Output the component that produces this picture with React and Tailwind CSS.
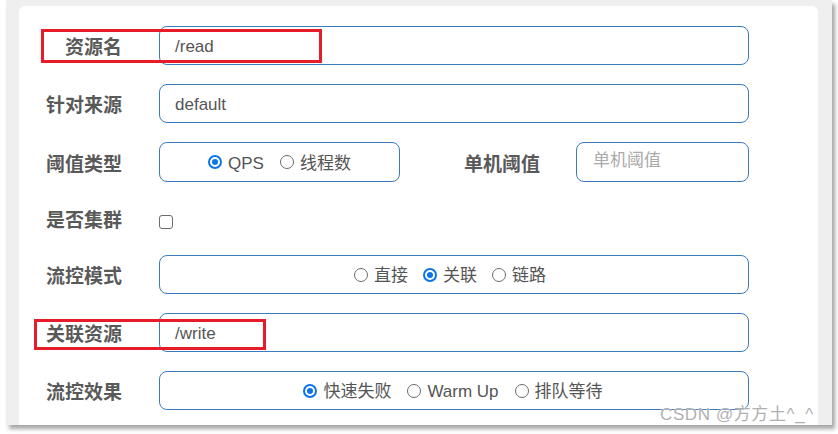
import React from "react";

const font = "font-['Liberation_Sans','Noto_Sans_CJK_SC',sans-serif]";

function Radio({ checked, label }) {
  return (
    <label className="flex items-center">
      {checked ? (
        <span className="w-[14px] h-[14px] rounded-full border-2 border-[#0b74ea] flex items-center justify-center">
          <span className="w-[6px] h-[6px] rounded-full bg-[#0b74ea]"></span>
        </span>
      ) : (
        <span className="w-[14px] h-[14px] rounded-full border border-[#6b6b6b] bg-white"></span>
      )}
      <span className="ml-[6px] pt-[3px] text-[17px] leading-[20px] text-[#555]">{label}</span>
    </label>
  );
}

function Label({ children, className = "w-[103px]" }) {
  return (
    <div className={`${className} shrink-0 text-right pt-[5px] text-[19px] leading-[22px] font-bold text-[#595959]`}>
      {children}
    </div>
  );
}

function Box({ children, className = "" }) {
  return (
    <div className={`h-[39px] border border-[#3a7bbf] rounded-[8px] bg-white flex items-center ${className}`}>
      {children}
    </div>
  );
}

export default function App() {
  return (
    <div className={`w-[838px] h-[434px] bg-white overflow-hidden relative ${font}`}>
      <div className="ml-[6px] w-[826px] h-[425px] bg-[#efefef] pt-[6px] pl-[13px] pr-[14px] shadow-[3px_4px_4px_rgba(0,0,0,0.35)]">
        <div className="bg-white h-full rounded-t-[6px] pt-[20px] flex flex-col gap-[19px]">
          {/* 资源名 */}
          <div className="flex items-center">
            <Label>资源名</Label>
            <Box className="ml-[37px] w-[590px] pl-[15px]">
              <span className="pt-[2px] text-[17px] text-[#555]">/read</span>
            </Box>
          </div>

          {/* 针对来源 */}
          <div className="flex items-center">
            <Label>针对来源</Label>
            <Box className="ml-[37px] w-[590px] pl-[15px]">
              <span className="pt-[2px] text-[17px] text-[#555]">default</span>
            </Box>
          </div>

          {/* 阈值类型 / 单机阈值 */}
          <div className="flex items-center">
            <Label>阈值类型</Label>
            <Box className="ml-[37px] w-[241px] h-[40px] justify-center gap-[16px]">
              <Radio checked label="QPS" />
              <Radio label="线程数" />
            </Box>
            <Label className="ml-[63px] w-[77px]">单机阈值</Label>
            <Box className="ml-[36px] w-[173px] h-[40px] pl-[16px]">
              <span className="pb-[2px] text-[17px] text-[#aaa]">单机阈值</span>
            </Box>
          </div>

          {/* 是否集群 */}
          <div className="flex items-center h-[35px]">
            <Label>是否集群</Label>
            <span className="ml-[37px] mt-[6px] w-[14px] h-[14px] rounded-[3px] border border-[#6b6b6b] bg-white"></span>
          </div>

          {/* 流控模式 */}
          <div className="flex items-center">
            <Label>流控模式</Label>
            <Box className="ml-[37px] w-[590px] justify-center gap-[15px] pr-[8px]">
              <Radio label="直接" />
              <Radio checked label="关联" />
              <Radio label="链路" />
            </Box>
          </div>

          {/* 关联资源 */}
          <div className="flex items-center">
            <Label>关联资源</Label>
            <Box className="ml-[37px] w-[590px] pl-[15px]">
              <span className="pt-[2px] text-[17px] text-[#555]">/write</span>
            </Box>
          </div>

          {/* 流控效果 */}
          <div className="flex items-center">
            <Label>流控效果</Label>
            <Box className="ml-[37px] w-[590px] justify-center gap-[16px] pr-[2px]">
              <Radio checked label="快速失败" />
              <Radio label="Warm Up" />
              <Radio label="排队等待" />
            </Box>
          </div>
        </div>
      </div>

      {/* 红框标注 */}
      <div className="absolute left-[41px] top-[29px] w-[281px] h-[34px] border-[3px] border-[#e61c2a]"></div>
      <div className="absolute left-[34px] top-[319px] w-[232px] h-[31px] border-[3px] border-[#e61c2a]"></div>

      {/* 水印 */}
      <div className="absolute left-[660px] top-[404px] text-[17px] leading-[22px] tracking-[0.6px] text-[#b0b0b0] [text-shadow:0_0_2px_#fff]">
        CSDN @方方土^_^
      </div>
    </div>
  );
}
